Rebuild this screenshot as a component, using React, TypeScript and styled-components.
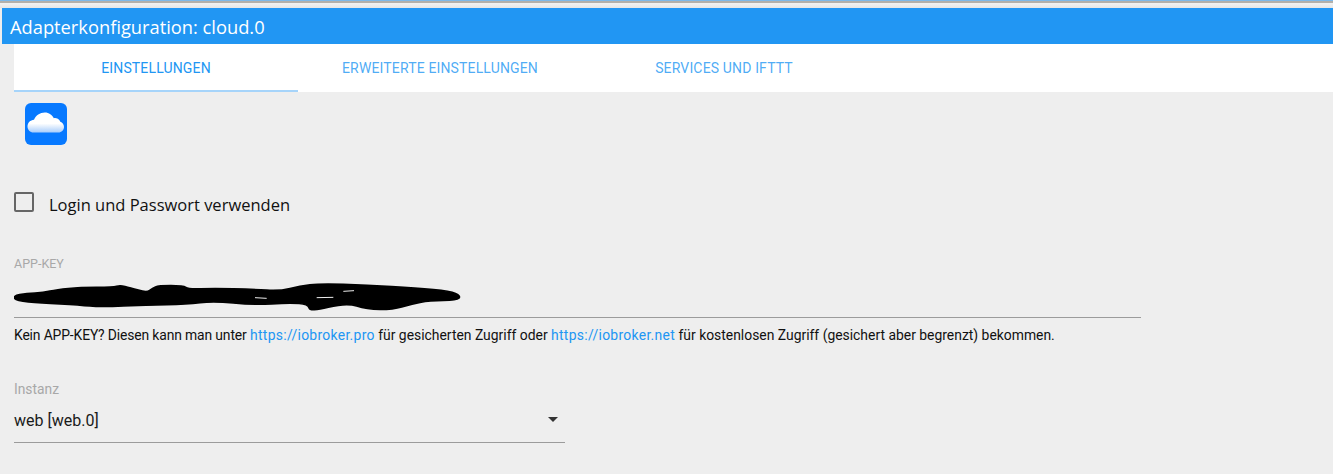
import styled, { createGlobalStyle } from "styled-components";

const GlobalStyle = createGlobalStyle`
  html, body {
    margin: 0;
    padding: 0;
    background-color: #eeeeee;
    font-family: "Roboto", "Liberation Sans", sans-serif;
    overflow: hidden;
  }
`;

const Page = styled.div`
  width: 1333px;
  height: 474px;
  display: flex;
  flex-direction: column;
  background-color: #eeeeee;
`;

const TopStrip = styled.div`
  height: 8px;
  background: linear-gradient(#7db9ea 0 1px, #b3b0aa 1px 3px, #f2f2f2 3px, #e6e6e6 8px);
`;

const TitleBar = styled.div`
  height: 36px;
  margin-left: 2px;
  padding-left: 8px;
  display: flex;
  align-items: center;
  background-color: #2196f3;
  color: #ffffff;
  font-family: "Open Sans", sans-serif;
  font-size: 18.3px;
`;

const Content = styled.div`
  padding-left: 14px;
  display: flex;
  flex-direction: column;
`;

const Tabs = styled.div`
  height: 48px;
  display: flex;
  background-color: #ffffff;
`;

const Tab = styled.div<{ $active?: boolean }>`
  width: 284px;
  box-sizing: border-box;
  display: flex;
  align-items: center;
  justify-content: center;
  padding-top: 2px;
  font-size: 14px;
  letter-spacing: 0.15px;
  text-transform: uppercase;
  color: ${(props) => (props.$active ? "#2196f3" : "rgba(33, 150, 243, 0.8)")};
  border-bottom: 2px solid ${(props) => (props.$active ? "#a6d4fa" : "transparent")};
`;

const Logo = styled.svg`
  display: block;
  width: 44px;
  height: 44px;
  margin: 10px 0 0 10px;
`;

const CheckRow = styled.label`
  display: flex;
  align-items: center;
  gap: 15px;
  margin-top: 46px;
  height: 24px;
  font-family: "Open Sans", sans-serif;
  font-size: 16.5px;
  color: #111111;
`;

const CheckBox = styled.span`
  width: 20px;
  height: 20px;
  box-sizing: border-box;
  border: 2px solid #666666;
  border-radius: 2px;
  margin-top: -4px;
`;

const Field = styled.div<{ $width: number; $top: number }>`
  width: ${(props) => props.$width}px;
  margin-top: ${(props) => props.$top}px;
  display: flex;
  flex-direction: column;
`;

const FieldLabel = styled.div<{ $size: number }>`
  height: 16px;
  line-height: 16px;
  font-size: ${(props) => props.$size}px;
  color: #a8a8a8;
`;

const ValueRow = styled.div`
  position: relative;
  height: 46px;
  display: flex;
  align-items: center;
  justify-content: space-between;
  box-sizing: border-box;
  border-bottom: 1px solid #9b9b9b;
  padding-top: 1px;
  font-size: 16px;
  color: #1a1a1a;
`;

const Scribble = styled.svg`
  position: absolute;
  left: 0;
  top: 0;
  width: 470px;
  height: 42px;
`;

const Hint = styled.p`
  margin: 9px 0 0;
  width: 1200px;
  line-height: 16px;
  font-size: 13.9px;
  color: #111111;
`;

const HintLead = styled.span`
  letter-spacing: -0.14px;
`;

const HintLink = styled.a`
  color: #2196f3;
  letter-spacing: 0.3px;
  text-decoration: none;
`;

const Caret = styled.span`
  width: 0;
  height: 0;
  margin-right: 7px;
  margin-bottom: 2px;
  border-left: 5px solid transparent;
  border-right: 5px solid transparent;
  border-top: 5px solid #333333;
`;

// marker stroke over the key, traced from the screenshot
const scribblePoints = [
  [38, 345], [80, 337], [130, 335], [170, 326], [240, 319], [340, 319], [360, 313], [390, 320], [440, 335], [458, 322],
  [475, 314], [550, 314], [565, 325], [640, 322], [760, 325], [840, 330], [900, 315], [960, 308], [1100, 312], [1250, 322],
  [1350, 330], [1383, 345], [1370, 358], [1290, 358], [1230, 370], [1180, 385], [1100, 385], [1040, 365], [930, 392], [925, 370],
  [870, 365], [760, 372], [640, 360], [560, 370], [440, 372], [300, 378], [240, 372], [120, 365], [50, 360],
];

const smoothPath = (points: number[][]): string => {
  const mid = (a: number[], b: number[]) => `${(a[0] + b[0]) / 2} ${(a[1] + b[1]) / 2}`;
  const last = points[points.length - 1];
  const curves = points.map((p, i) => `Q${p[0]} ${p[1]} ${mid(p, points[(i + 1) % points.length])}`);
  return `M${mid(last, points[0])}${curves.join("")}Z`;
};

const App = () => (
  <Page>
    <GlobalStyle />
    <TopStrip />
    <TitleBar>Adapterkonfiguration: cloud.0</TitleBar>
    <Content>
      <Tabs>
        <Tab $active>Einstellungen</Tab>
        <Tab>Erweiterte Einstellungen</Tab>
        <Tab>Services und IFTTT</Tab>
      </Tabs>
      <Logo viewBox="0 0 44 44">
        <defs>
          <linearGradient id="cloudFill" x1="0" y1="0" x2="0" y2="1">
            <stop offset="0" stopColor="#ffffff" />
            <stop offset="0.55" stopColor="#ffffff" />
            <stop offset="1" stopColor="#a9cdfb" />
          </linearGradient>
        </defs>
        <rect x="1" y="1" width="42" height="42" rx="6" fill="#0779ff" />
        <path
          d="M9.500 30.500C6 30.500 3.500 27.800 3.500 24.500C3.500 21 6.300 18 10 17.800C11.800 13.500 16 10.500 20.800 10.500C25 10.500 28.200 13 29.800 16.200C31 15.900 32.300 16 33.300 16.600C35 17.500 36 18.800 36.300 19.800C38.500 20.500 40 22.500 40 25C40 28 37.500 30.500 34.500 30.500Z"
          fill="url(#cloudFill)"
        />
      </Logo>
      <CheckRow>
        <CheckBox />
        Login und Passwort verwenden
      </CheckRow>
      <Field $width={1127} $top={40}>
        <FieldLabel $size={12.5}>APP-KEY</FieldLabel>
        <ValueRow>
          <Scribble viewBox="42 273 1410 126">
            <path d={smoothPath(scribblePoints)} fill="#000000" stroke="#000000" strokeWidth="5" strokeLinejoin="round" />
            <path d="M765 350L800 352M950 350L1000 349M1030 331L1062 329" stroke="#eeeeee" strokeWidth="3" fill="none" />
          </Scribble>
        </ValueRow>
        <Hint>
          <HintLead>Kein APP-KEY? Diesen kann man unter</HintLead> <HintLink>https://iobroker.pro</HintLink> für gesicherten Zugriff oder{" "}
          <HintLink>https://iobroker.net</HintLink> für kostenlosen Zugriff (gesichert aber begrenzt) bekommen.
        </Hint>
      </Field>
      <Field $width={551} $top={38}>
        <FieldLabel $size={13.8}>Instanz</FieldLabel>
        <ValueRow>
          web [web.0]
          <Caret />
        </ValueRow>
      </Field>
    </Content>
  </Page>
);

export default App;
